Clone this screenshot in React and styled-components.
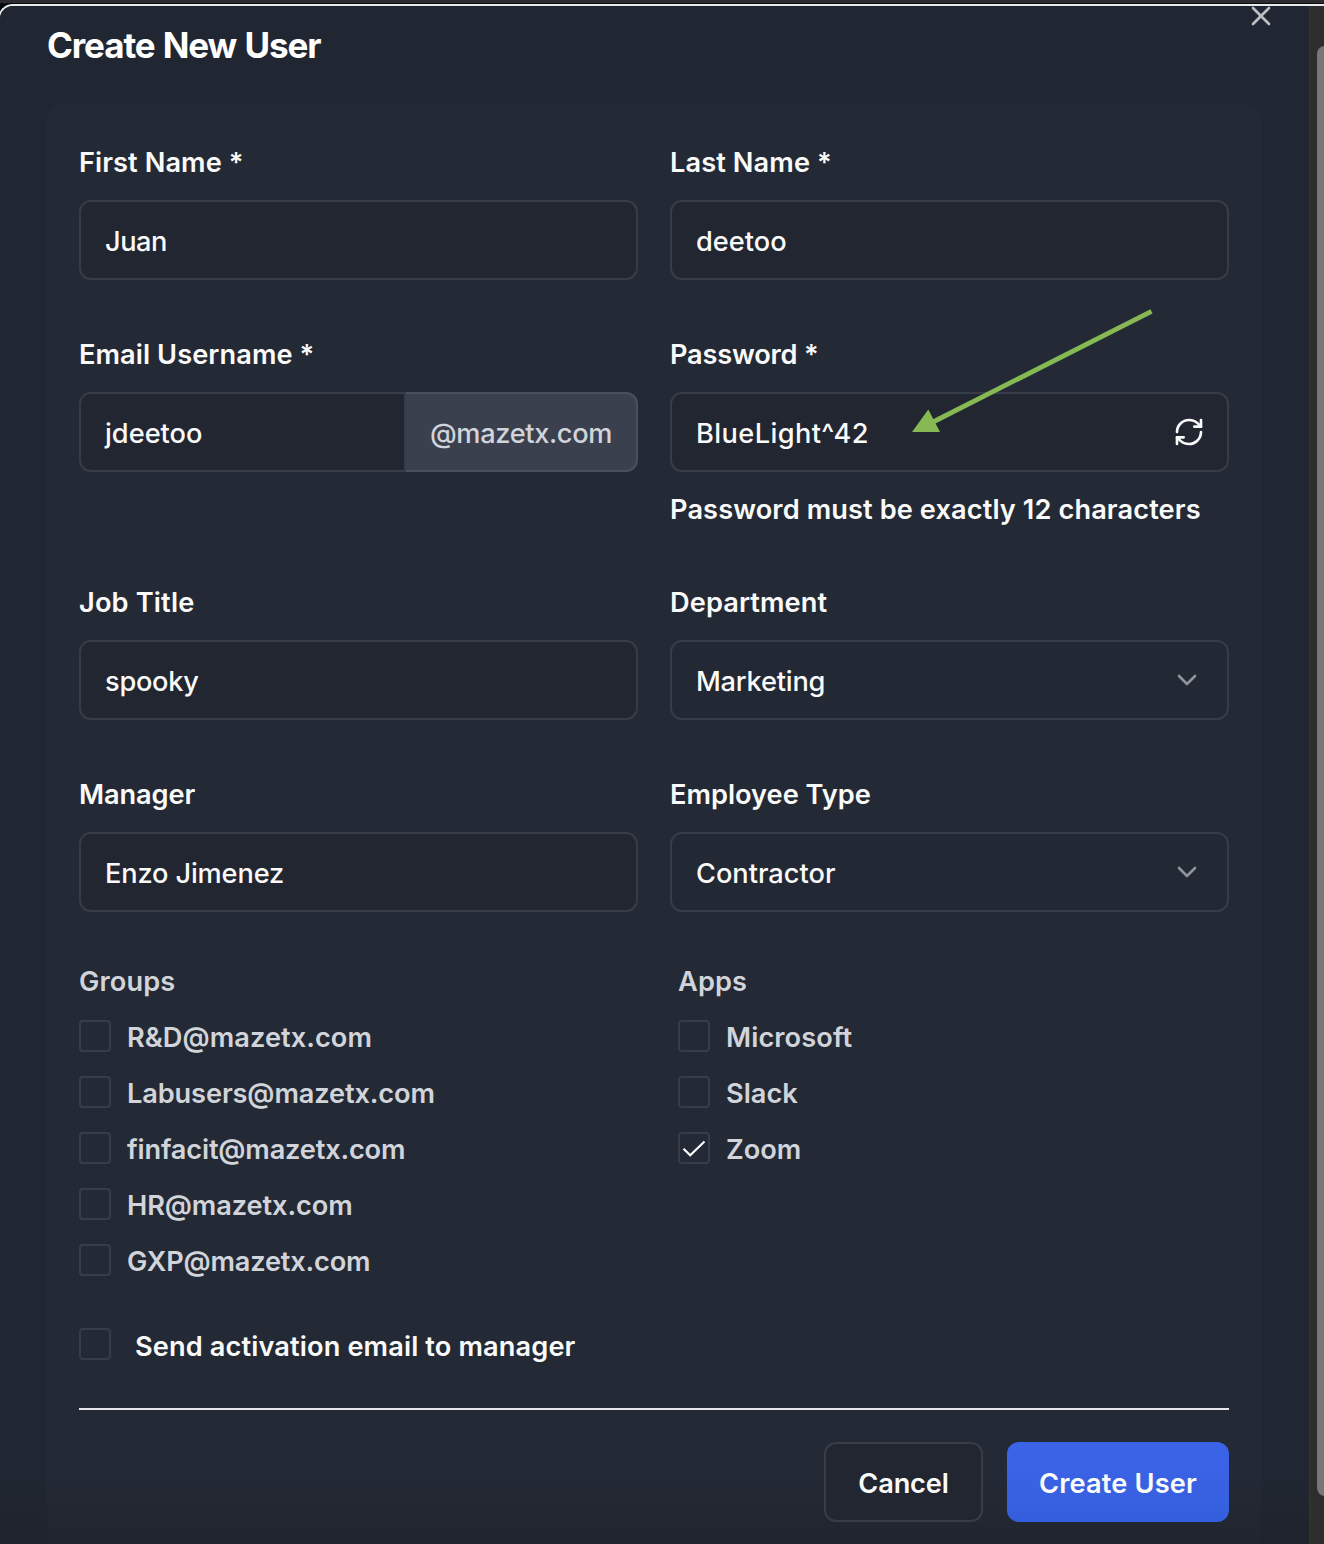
import React from "react";
import styled, { createGlobalStyle } from "styled-components";
import { ChevronDown, RefreshCw, X } from "lucide-react";

const GlobalStyle = createGlobalStyle`
  *, *::before, *::after { box-sizing: border-box; }
  body { margin: 0; background: #2b2a30; overflow: hidden; }
`;

const Page = styled.div`
  display: flex;
  flex-direction: column;
  height: 1544px;
  overflow: hidden;
  background: #06070d;
  font-family: Inter, "Liberation Sans", sans-serif;
  font-size: 27.2px;
  font-weight: 600;
  line-height: 36px;
  color: #fafafa;
`;

const TopStrip = styled.div`
  flex: none;
  height: 4px;
  background: #2c2b31;
  border-bottom: 1px solid #0b0b10;
`;

const Window = styled.div`
  flex: 1;
  min-height: 0;
  display: flex;
  margin-left: -2px;
  border-top: 2px solid #e9eaee;
  border-left: 2px solid #e9eaee;
  border-top-left-radius: 15px;
  overflow: hidden;
  background: #202631;
`;

const Dialog = styled.main`
  position: relative;
  flex: 1;
  padding: 0 48px 0 47px;
  background: linear-gradient(#212732 0, #212732 1470px, #1e232d 1538px);
`;

const Title = styled.h1`
  margin: 0;
  padding-top: 15px;
  height: 98px;
  font-size: 35px;
  line-height: 48px;
  font-weight: 700;
  letter-spacing: -1.1px;
  word-spacing: 1px;
  color: #fff;
`;

const CloseButton = styled.button`
  position: absolute;
  top: -6px;
  right: 32px;
  display: flex;
  padding: 0;
  border: 0;
  background: none;
  color: #bcbec2;
`;

const Form = styled.form`
  height: 1440px;
  padding: 40px 32px 0;
  border-radius: 16px 16px 0 0;
  background: linear-gradient(#242a35 0, #242a35 1370px, #20252f 1440px);
`;

const FieldGrid = styled.div`
  display: grid;
  grid-template-columns: 1fr 1fr;
  gap: 56px 32px;
`;

const Field = styled.div`
  display: flex;
  flex-direction: column;
`;

const Label = styled.label`
  height: 36px;
  padding-top: 1px;
  margin-bottom: 20px;
  letter-spacing: ${(p) => p.$ls || 0}px;
`;

const Control = styled.div`
  flex: ${(p) => (p.$joined ? "1" : "none")};
  display: flex;
  align-items: center;
  justify-content: space-between;
  height: 80px;
  padding: 4px ${(p) => p.$end || 24}px 0 24px;
  border: 2px solid #373d48;
  border-radius: ${(p) => (p.$joined ? "12px 0 0 12px" : "12px")};
  background: ${(p) => (p.$select ? "#222834" : "#212631")};
  font-weight: 500;

  svg { margin-top: -5px; }
`;

const Value = styled.span`
  letter-spacing: ${(p) => p.$ls || 0}px;
`;

const Joined = styled.div`
  display: flex;
`;

const Suffix = styled.div`
  display: flex;
  align-items: center;
  width: 232px;
  height: 80px;
  padding: 4px 0 0 24px;
  border: 2px solid #4b505e;
  border-left: 0;
  border-radius: 0 12px 12px 0;
  background: #3b404f;
  color: #d1d4da;
  font-weight: 500;
`;

const Hint = styled.p`
  margin: 18px 0 0;
  height: 38px;
  line-height: 40px;
  white-space: nowrap;
  letter-spacing: ${(p) => p.$ls || 0}px;
`;

const Choices = styled.div`
  display: grid;
  grid-template-columns: 1fr 1fr;
  gap: 48px;
  margin-top: 52px;
  color: #d1d4da;
`;

const ChoiceColumn = styled.div`
  display: flex;
  flex-direction: column;
  gap: 24px;
`;

const ChoiceTitle = styled.div`
  margin-bottom: -4px;
  letter-spacing: 0.1px;
`;

const Choice = styled.label`
  display: flex;
  align-items: center;
  gap: ${(p) => p.$gap || 16}px;
  height: 32px;
  margin-top: ${(p) => p.$top || 0}px;

  span { padding-top: ${(p) => p.$drop || 4}px; letter-spacing: ${(p) => p.$ls || 0}px; }
`;

const Box = styled.i`
  display: block;
  width: 32px;
  height: 32px;
  border: 2px solid #373d48;
  border-radius: 4px;

  svg { display: block; margin: -2px; }
`;

const Footer = styled.footer`
  display: flex;
  justify-content: flex-end;
  gap: 24px;
  margin-top: 48px;
  padding-top: 32px;
  border-top: 2px solid #e5e7ec;
`;

const Button = styled.button`
  width: ${(p) => p.$width}px;
  height: 80px;
  padding: 4px 0 0;
  border: ${(p) => (p.$primary ? "0" : "2px solid #373d48")};
  border-radius: 12px;
  background: ${(p) => (p.$primary ? "linear-gradient(#3a63e5 30%, #345fdc)" : "#212631")};
  color: #fafafa;
  font: inherit;
  letter-spacing: ${(p) => p.$ls || 0}px;
`;

const Scrollbar = styled.aside`
  flex: none;
  width: 15px;
  padding: 40px 0 0 6px;
  border-left: 2px solid #34322f;
  background: #2d2d2d;
`;

const Thumb = styled.div`
  width: 16px;
  height: 1450px;
  border-radius: 8px;
  background: #777;
`;

const Arrow = styled.svg`
  position: absolute;
  top: 294px;
  left: 900px;
  pointer-events: none;
`;

const Text = ({ label, value, ls, vls }) => (
  <Field>
    <Label $ls={ls}>{label}</Label>
    <Control><Value $ls={vls}>{value}</Value></Control>
  </Field>
);

const Select = ({ label, value, ls, vls }) => (
  <Field>
    <Label $ls={ls}>{label}</Label>
    <Control $select>
      <Value $ls={vls}>{value}</Value>
      <ChevronDown size={32} color="#8f939b" />
    </Control>
  </Field>
);

const Check = ({ children, checked, ...rest }) => (
  <Choice {...rest}>
    <Box>
      {checked && (
        <svg width="32" height="32" viewBox="0 0 32 32" fill="none" stroke="#fff" strokeWidth="2.1">
          <path d="M5.5 16.8L12.2 23.3L26.5 9.4" />
        </svg>
      )}
    </Box>
    <span>{children}</span>
  </Choice>
);

const groups = [
  ["R&D@mazetx.com", 0.05],
  ["Labusers@mazetx.com", -0.12],
  ["finfacit@mazetx.com", -0.17],
  ["HR@mazetx.com", -0.1],
  ["GXP@mazetx.com", -0.19],
];

export default function App() {
  return (
    <Page>
      <GlobalStyle />
      <TopStrip />
      <Window>
        <Dialog>
          <Title>Create New User</Title>
          <CloseButton type="button" aria-label="Close"><X size={32} /></CloseButton>
          <Form>
            <FieldGrid>
              <Text label="First Name *" value="Juan" ls={0.07} vls={-0.5} />
              <Text label="Last Name *" value="deetoo" ls={0.1} />
              <Field>
                <Label $ls={0.08}>Email Username *</Label>
                <Joined>
                  <Control $joined><Value>jdeetoo</Value></Control>
                  <Suffix><Value $ls={-0.35}>@mazetx.com</Value></Suffix>
                </Joined>
              </Field>
              <Field>
                <Label $ls={-0.2}>Password *</Label>
                <Control $end={22}>
                  <Value $ls={0.4}>BlueLight^42</Value>
                  <RefreshCw size={32} />
                </Control>
                <Hint $ls={0.1}>Password must be exactly 12 characters</Hint>
              </Field>
              <Text label="Job Title" value="spooky" ls={0.15} vls={-0.25} />
              <Select label="Department" value="Marketing" ls={0.1} vls={-0.2} />
              <Text label="Manager" value="Enzo Jimenez" ls={-0.1} vls={-0.15} />
              <Select label="Employee Type" value="Contractor" />
            </FieldGrid>
            <Choices>
              <ChoiceColumn>
                <ChoiceTitle>Groups</ChoiceTitle>
                {groups.map(([name, ls]) => <Check key={name} $ls={ls}>{name}</Check>)}
              </ChoiceColumn>
              <ChoiceColumn>
                <ChoiceTitle>Apps</ChoiceTitle>
                <Check $ls={0.1}>Microsoft</Check>
                <Check>Slack</Check>
                <Check checked>Zoom</Check>
              </ChoiceColumn>
            </Choices>
            <Check $gap={24} $top={52} $drop={6} $ls={0.12}>Send activation email to manager</Check>
            <Footer>
              <Button type="button" $width={159} $ls={-0.15}>Cancel</Button>
              <Button type="button" $primary $width={222} $ls={0.15}>Create User</Button>
            </Footer>
          </Form>
          <Arrow width="260" height="150" viewBox="900 300 260 150">
            <path d="M1151.5 311.3L932 422.5" stroke="#86b953" strokeWidth="4.8" />
            <path d="M912 432L928.3 409.5L940 432Z" fill="#86b953" />
          </Arrow>
        </Dialog>
        <Scrollbar><Thumb /></Scrollbar>
      </Window>
    </Page>
  );
}
